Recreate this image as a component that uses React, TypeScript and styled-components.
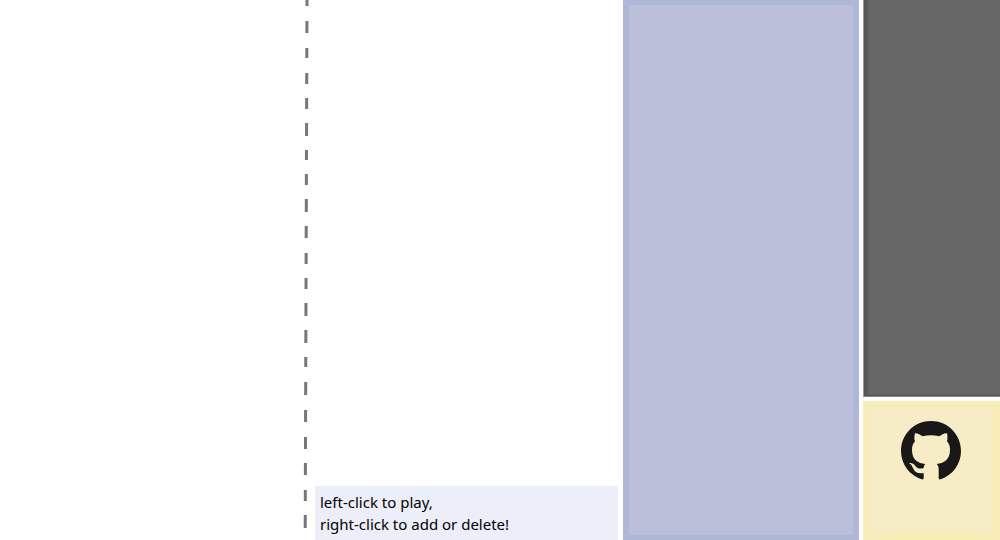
import React from 'react';
import styled, { createGlobalStyle } from 'styled-components';

const GlobalStyle = createGlobalStyle`
  * { box-sizing: border-box; }
  body { margin: 0; background: #fff; overflow: hidden; }
`;

const Page = styled.main`
  display: grid;
  grid-template-columns: 315fr 303fr 5px 236fr 4px 137fr;
  height: 100vh;
  font-family: 'Segoe UI', 'Noto Sans', 'Open Sans', sans-serif;
  color: #000;
`;

const Board = styled.section`
  display: flex;
  justify-content: flex-end;
  overflow: hidden;
`;

const DashedLine = styled.svg`
  width: 20px;
  height: 540px;
  flex: none;
`;

const Stage = styled.section`
  display: flex;
  flex-direction: column;
  justify-content: flex-end;
`;

const Hint = styled.p`
  margin: 0;
  padding: 5px;
  background: #eceff9;
  font-size: 15px;
  line-height: 22px;
  white-space: nowrap;
`;

const BluePanel = styled.section`
  grid-column: 4;
  background: #bbbfda;
  border: 5px solid #aeb6d9;
  border-width: 5px 6px;
`;

const Sidebar = styled.aside`
  grid-column: 6;
  display: flex;
  flex-direction: column;
  gap: 4px;
`;

const DarkPanel = styled.div`
  flex: 1;
  background: #676767;
  border-left: 1px solid #9a9a9a;
  border-bottom: 1px solid #8a8a8a;
  box-shadow: inset 5px 0 2px -1px #575757, inset 0 -2px 1px -1px #505050;
`;

const LinkCard = styled.div`
  height: 139px;
  padding: 13px 31px;
  background: #f6edc6;
  border: 7px solid #f8ecb7;
`;

const RepoLink = styled.a`
  display: block;
  width: 60px;
  height: 60px;
  color: #191717;
`;

const dashes = [
  [0, 6], [21, 33], [48, 58], [73, 84], [98, 109], [123, 136], [150, 160],
  [174, 185], [199, 212], [226, 238], [253, 264], [278, 289], [303, 316],
  [330, 343], [357, 367], [382, 395], [410, 422], [437, 449], [463, 475],
  [490, 501], [515, 528],
];

const lineX = (y: number) => 12 - (y * 1.8) / 528;

export default function App() {
  return (
    <>
      <GlobalStyle />
      <Page>
        <Board>
          <DashedLine viewBox="0 0 20 540" aria-hidden="true">
            {dashes.map(([from, to]) => (
              <line
                key={from}
                x1={lineX(from)}
                y1={from}
                x2={lineX(to)}
                y2={to}
                stroke="#777"
                strokeWidth="3"
              />
            ))}
          </DashedLine>
        </Board>
        <Stage>
          <Hint>
            left-click to play,
            <br />
            right-click to add or delete!
          </Hint>
        </Stage>
        <BluePanel />
        <Sidebar>
          <DarkPanel />
          <LinkCard>
            <RepoLink href="https://github.com" aria-label="GitHub">
              <svg width="60" height="60" viewBox="0 0 180 180" fill="currentColor">
                <path d="M90 0C40 0 0 40 0 90c0 40 26 73 62 85 4 1 6-1 6-4V156C53 158 43 156 37 143C33 136 32 131 24 127C30 124 38 127 43 135C50 144 60 144 68 141C68 136 70 132 73 129C51 126 33 117 33 86C33 75 36 68 42 61C39 55 40 45 42 37C49 36 57 41 65 46C82 42 98 42 115 46C122 41 130 36 138 37C140 45 140 55 138 61C144 68 147 75 147 86C147 117 128 126 107 129C111 132 113 137 113 145V171c0 3 2 5 6 4C154 163 180 130 180 90C180 40 140 0 90 0z" />
              </svg>
            </RepoLink>
          </LinkCard>
        </Sidebar>
      </Page>
    </>
  );
}
